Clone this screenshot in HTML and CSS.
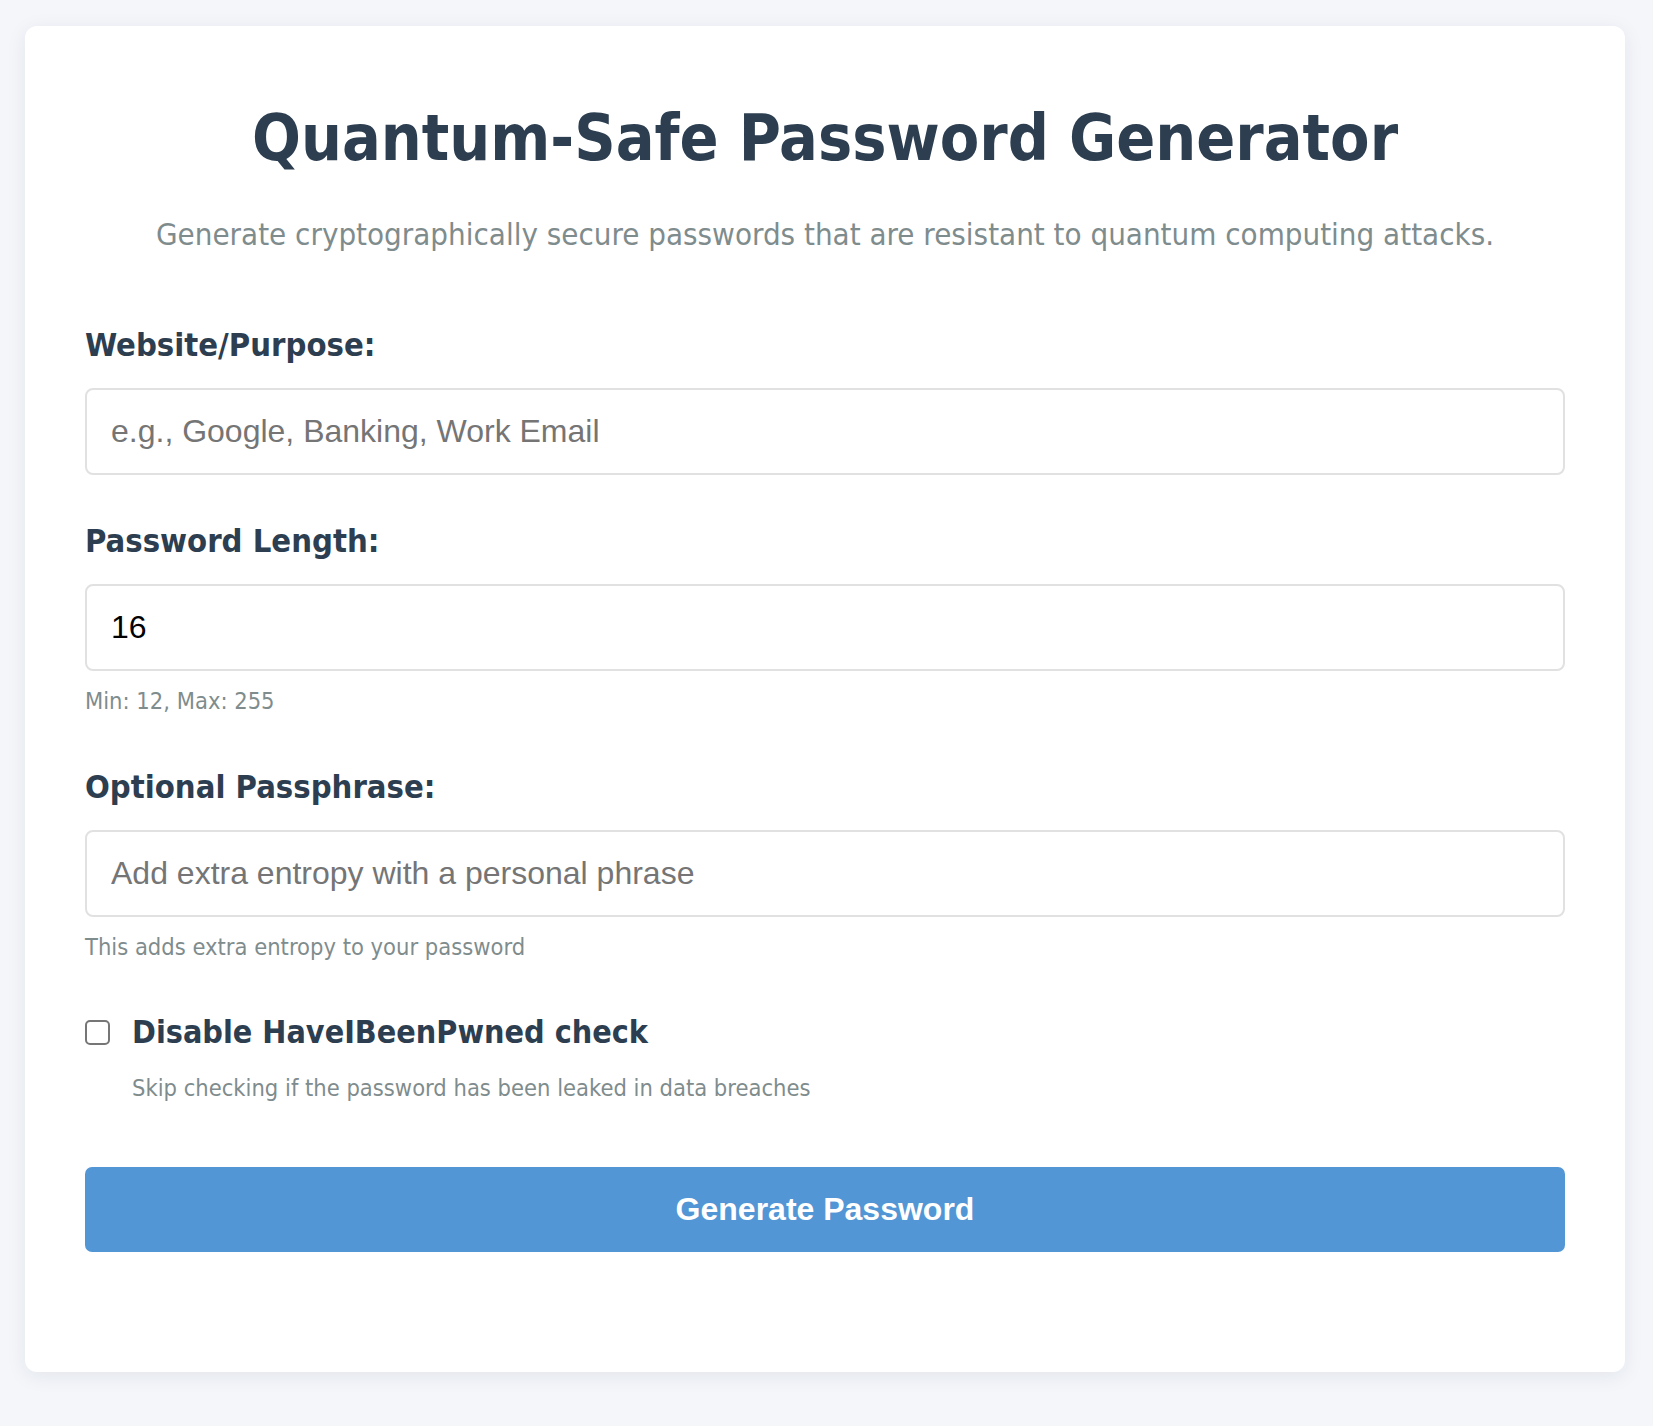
FILE: index.html
```html
<!DOCTYPE html>
<html lang="en">
<head>
<meta charset="utf-8">
<title>Quantum-Safe Password Generator</title>
<link rel="stylesheet" href="styles.css">
</head>
<body>
<main class="card">
  <h1 class="title">Quantum-Safe Password Generator</h1>
  <p class="subtitle">Generate cryptographically secure passwords that are resistant to quantum computing attacks.</p>

  <form class="form">
    <div class="group">
      <label class="label" for="site">Website/Purpose:</label>
      <input class="field" id="site" type="text" placeholder="e.g., Google, Banking, Work Email">
    </div>

    <div class="group">
      <label class="label" for="len">Password Length:</label>
      <input class="field" id="len" type="text" value="16">
      <div class="hint">Min: 12, Max: 255</div>
    </div>

    <div class="group">
      <label class="label" for="phrase">Optional Passphrase:</label>
      <input class="field" id="phrase" type="text" placeholder="Add extra entropy with a personal phrase">
      <div class="hint">This adds extra entropy to your password</div>
    </div>

    <div class="check-group">
      <label class="check-row" for="hibp">
        <input class="check" id="hibp" type="checkbox">
        <span class="check-label">Disable HaveIBeenPwned check</span>
      </label>
      <div class="check-hint">Skip checking if the password has been leaked in data breaches</div>
    </div>

    <button class="btn" type="button">Generate Password</button>
  </form>
</main>
</body>
</html>
```

FILE: styles.css
```css
* { box-sizing: border-box; }

html, body { margin: 0; }

body {
  background: #f4f6fa;
  padding: 26px 28px 56px 25px;
  font-family: "DejaVu Sans Condensed", "DejaVu Sans", sans-serif;
  font-stretch: condensed;
  color: #2c3e50;
}

.card {
  background: #ffffff;
  border-radius: 12px;
  box-shadow: 0 4px 20px rgba(30, 40, 70, 0.08);
  padding: 74px 60px 120px;
}

.title {
  margin: 0;
  text-align: center;
  font-size: 64px;
  line-height: 76px;
  font-weight: bold;
  color: #2c3e50;
}

.subtitle {
  margin: 41px 0 0;
  text-align: center;
  font-size: 31px;
  line-height: 34px;
  color: #7f8c8d;
}

.form {
  margin-top: 77px;
  display: flex;
  flex-direction: column;
}

.group {
  display: flex;
  flex-direction: column;
  margin-bottom: 49px;
}

.label {
  font-size: 32.5px;
  line-height: 35px;
  font-weight: bold;
  color: #2c3e50;
  margin-bottom: 25px;
}

.field {
  width: 100%;
  font-family: "Liberation Sans", Arial, sans-serif;
  font-stretch: normal;
  font-size: 32px;
  line-height: 37px;
  padding: 23px 24px;
  border: 2px solid #e1e1e1;
  border-radius: 8px;
  color: #000;
  background: #fff;
  outline: none;
}

.field::placeholder { color: #757575; }

.hint {
  margin-top: 17px;
  font-size: 23.5px;
  line-height: 26px;
  color: #7f8c8d;
  margin-bottom: 7px;
}

.check-group {
  margin-top: -1px;
  display: flex;
  flex-direction: column;
}

.check-row {
  display: flex;
  align-items: center;
  gap: 22px;
}

.check {
  appearance: none;
  -webkit-appearance: none;
  margin: 0;
  width: 25px;
  height: 25px;
  border: 2px solid #767676;
  border-radius: 5px;
  background: #fff;
  flex: none;
}

.check-label {
  font-size: 32px;
  line-height: 35px;
  font-weight: bold;
  color: #2c3e50;
}

.check-hint {
  margin-top: 25px;
  margin-left: 47px;
  font-size: 23.5px;
  line-height: 26px;
  color: #7f8c8d;
}

.btn {
  margin-top: 66px;
  height: 85px;
  width: 100%;
  border: none;
  border-radius: 7px;
  background: #5296d5;
  color: #fff;
  font-family: "Liberation Sans", Arial, sans-serif;
  font-stretch: normal;
  font-size: 32px;
  font-weight: bold;
}
```
